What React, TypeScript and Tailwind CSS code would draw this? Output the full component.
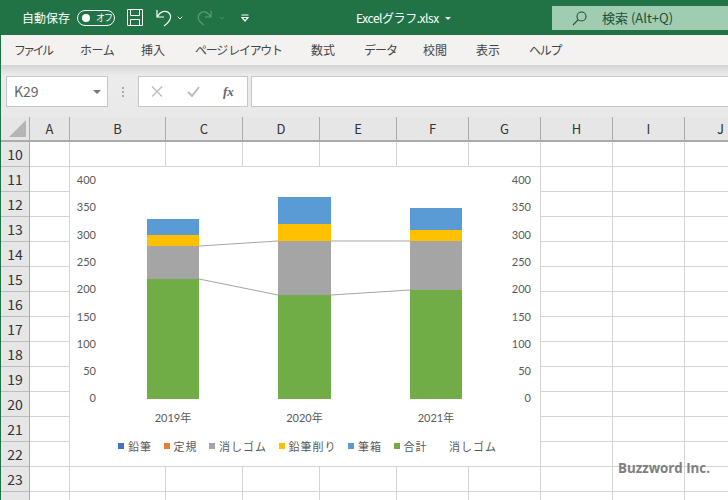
import { ChevronDown } from "lucide-react";

const FONT = "font-['Noto_Sans_CJK_JP','Noto_Sans',sans-serif]";

const tabs = [
  { label: "ファイル", w: "w-[66px] tracking-[-2.7px]" },
  { label: "ホーム", w: "w-[61px] tracking-[-0.4px]" },
  { label: "挿入", w: "w-[54px]" },
  { label: "ページ レイアウト", w: "w-[116px] tracking-[-1.3px]" },
  { label: "数式", w: "w-[53px]" },
  { label: "データ", w: "w-[59px] tracking-[-1px]" },
  { label: "校閲", w: "w-[53px]" },
  { label: "表示", w: "w-[53px]" },
  { label: "ヘルプ", w: "w-[50px] tracking-[-1.3px]" },
];

const cols = [
  { label: "A", w: "w-[40px]" },
  { label: "B", w: "w-[96px]" },
  { label: "C", w: "w-[77px]" },
  { label: "D", w: "w-[77px]" },
  { label: "E", w: "w-[77px]" },
  { label: "F", w: "w-[72px]" },
  { label: "G", w: "w-[72px]" },
  { label: "H", w: "w-[72px]" },
  { label: "I", w: "w-[72px]" },
  { label: "J", w: "w-[72px]" },
];

const rows = [10, 11, 12, 13, 14, 15, 16, 17, 18, 19, 20, 21, 22, 23, 24];

const bars = [
  { x: 77, w: 52, label: "2019年", seg: [[112, 120, "#70ad47"], [79, 33, "#a5a5a5"], [68, 11, "#ffc000"], [52, 16, "#5b9bd5"]] },
  { x: 208, w: 53, label: "2020年", seg: [[128, 104, "#70ad47"], [74, 54, "#a5a5a5"], [57, 17, "#ffc000"], [30, 27, "#5b9bd5"]] },
  { x: 340, w: 52, label: "2021年", seg: [[123, 109, "#70ad47"], [74, 49, "#a5a5a5"], [63, 11, "#ffc000"], [41, 22, "#5b9bd5"]] },
] as const;

const ticks = [400, 350, 300, 250, 200, 150, 100, 50, 0];

const legend = [
  { label: "鉛筆", color: "bg-[#4472c4]" },
  { label: "定規", color: "bg-[#ed7d31]" },
  { label: "消しゴム", color: "bg-[#a5a5a5]" },
  { label: "鉛筆削り", color: "bg-[#ffc000]" },
  { label: "筆箱", color: "bg-[#5b9bd5]" },
  { label: "合計", color: "bg-[#70ad47]" },
];

function Chart() {
  return (
    <div className="absolute left-[69px] top-[25px] w-[470px] h-[299px] bg-white flex flex-col">
      <svg width="470" height="258" viewBox="0 0 470 258" className="block shrink-0 font-['Lato',sans-serif]">
        {ticks.map((t, i) => (
          <g key={t} fontSize="11" fill="#595959">
            <text x="26" y={17 + i * 27.3} textAnchor="end">{t}</text>
            <text x="461" y={17 + i * 27.3} textAnchor="end">{t}</text>
          </g>
        ))}
        {bars.map((b) =>
          b.seg.map(([y, h, c]) => <rect key={c} x={b.x} y={y + 0} width={b.w} height={h} fill={c} />)
        )}
        <path d="M129 112 L208 128 M261 128 L340 123 M129 79 L208 74 M261 74 L340 74" stroke="#a5a5a5" strokeWidth="1" fill="none" />
        {bars.map((b) => (
          <text key={b.label} x={b.x + b.w / 2} y="255" textAnchor="middle" fontSize="11" fill="#595959" fontFamily="Lato, 'Noto Sans CJK JP', sans-serif">{b.label}</text>
        ))}
      </svg>
      <div className={`flex items-center pl-[48px] mt-[14px] text-[11px] leading-[14px] text-[#595959] ${FONT}`}>
        {legend.map((l) => (
          <div key={l.label} className="flex items-center mr-[11.5px]">
            <span className={`w-[6px] h-[6px] mr-[4px] ${l.color}`} />
            <span className="tracking-[1px]">{l.label}</span>
          </div>
        ))}
        <span className="ml-[10px] tracking-[1px]">消しゴム</span>
      </div>
    </div>
  );
}

export default function App() {
  return (
    <div className={`w-[728px] h-[500px] overflow-hidden bg-[#e6e6e6] flex flex-col border-l border-[#217346] ${FONT}`}>
      {/* title bar */}
      <div className="h-[35px] shrink-0 bg-[#217346] flex items-center text-white text-[12px] relative">
        <span className="ml-[21px]">自動保存</span>
        <div className="ml-[7px] w-[38px] h-[16px] rounded-full border border-white flex items-center pl-[4px]">
          <span className="w-[8px] h-[8px] rounded-full bg-white" />
          <span className="ml-[6px] text-[9px] leading-none tracking-[-1px]">オフ</span>
        </div>
        <svg width="16" height="17" viewBox="0 0 16 17" fill="none" stroke="white" strokeWidth="1" className="ml-[12px]">
          <path d="M0.5 0.5H15.5V16.5H0.5Z M3.5 0.5V6.5H12.5V0.5 M3.5 16.5V10.5H12.5V16.5" />
        </svg>
        <svg width="16" height="18" viewBox="0 0 16 18" fill="none" stroke="white" strokeWidth="1.2" className="ml-[13px]">
          <path d="M1 1V8H8 M1.5 7.5C4 2.5 9 1 12.5 3.5C16 6.5 15.5 11.5 8 17" />
        </svg>
        <ChevronDown size={8} strokeWidth={3} className="ml-[4px] text-white" />
        <svg width="15" height="17" viewBox="0 0 15 17" fill="none" stroke="#5d9c7c" strokeWidth="1.1" className="ml-[13px]">
          <path d="M14 2V8H8 M13.5 7.5C11 3 6 1.5 3.5 4C0 7 0 11.5 7 16" />
        </svg>
        <ChevronDown size={8} strokeWidth={2} className="ml-[6px] text-[#5d9c7c]" />
        <svg width="8" height="8" viewBox="0 0 8 8" fill="none" stroke="white" strokeWidth="1.2" className="ml-[15px]">
          <path d="M0.5 1H7.5 M1 3.5H7L4 7Z" />
        </svg>
        <span className="absolute left-[355px] top-[9px] text-[12px] leading-[17px] tracking-[-0.45px]">Excelグラフ.xlsx</span>
        <span className="absolute left-[444px] top-[17px] w-0 h-0 border-x-[3px] border-x-transparent border-t-[3px] border-t-white" />
        <div className="absolute left-[551px] top-[6px] w-[177px] h-[24px] bg-[#a0cdb2] flex items-center text-[#1f4f36] text-[13px]">
          <svg width="15" height="15" viewBox="0 0 15 15" fill="none" stroke="#1f4f36" strokeWidth="1.1" className="ml-[20px]">
            <circle cx="9.5" cy="5.5" r="4.5" />
            <path d="M6.3 8.7L1 14" />
          </svg>
          <span className="ml-[15px]">検索 (Alt+Q)</span>
        </div>
      </div>

      {/* ribbon tabs */}
      <div className="h-[30px] shrink-0 bg-[#f3f2f1] flex items-center text-[12px] text-[#444444] pl-[13px]">
        {tabs.map((t) => (
          <div key={t.label} className={`${t.w} shrink-0 whitespace-nowrap`}>{t.label}</div>
        ))}
      </div>

      {/* formula bar */}
      <div className="h-[52px] shrink-0 bg-gradient-to-b from-[#d4d4d4] via-[#ececec] via-[20%] to-[#e9e9e9] pt-[11px] flex items-start">
        <div className="ml-[5px] w-[102px] h-[31px] bg-white border border-[#c6c6c6] flex items-center justify-between pl-[7px] pr-[6px] text-[14px] text-[#666666]">
          <span>K29</span>
          <span className="w-0 h-0 border-x-[4px] border-x-transparent border-t-[4px] border-t-[#777777]" />
        </div>
        <div className="w-[30px] h-[31px] flex flex-col items-center justify-center gap-[2px]">
          <span className="w-[2px] h-[2px] bg-[#aaaaaa]" />
          <span className="w-[2px] h-[2px] bg-[#aaaaaa]" />
          <span className="w-[2px] h-[2px] bg-[#aaaaaa]" />
        </div>
        <div className="w-[110px] h-[31px] bg-white border border-[#c6c6c6] flex items-center">
          <svg width="12" height="11" viewBox="0 0 12 11" stroke="#bdbdbd" strokeWidth="1.4" fill="none" className="ml-[12px]">
            <path d="M1 0.5L11 10.5 M11 0.5L1 10.5" />
          </svg>
          <svg width="13" height="11" viewBox="0 0 13 11" stroke="#bdbdbd" strokeWidth="2" fill="none" className="ml-[24px]">
            <path d="M1 6L5 10L12 1" />
          </svg>
          <span className="ml-[23px] text-[13px] italic font-['Liberation_Serif',serif] font-bold text-[#666666]">fx</span>
        </div>
        <div className="ml-[3px] flex-1 h-[31px] bg-white border-y border-l border-[#c6c6c6]" />
      </div>

      {/* column headers */}
      <div className="h-[25px] shrink-0 flex bg-[#e6e6e6] border-b-2 border-[#ababab] text-[13px] text-[#333333]">
        <div className="w-[29px] shrink-0 relative border-r border-[#ababab]">
          <span className="absolute right-[3px] bottom-[3px] w-0 h-0 border-l-[17px] border-l-transparent border-b-[17px] border-b-[#b5b5b5]" />
        </div>
        {cols.map((c) => (
          <div key={c.label} className={`${c.w} shrink-0 flex items-center justify-center border-r border-[#ababab]`}>{c.label}</div>
        ))}
      </div>

      {/* sheet */}
      <div className="relative flex-1 bg-white">
        {rows.map((r) => (
          <div key={r} className="h-[25px] flex">
            <div className="w-[29px] shrink-0 bg-[#e6e6e6] border-r border-b border-r-[#ababab] border-b-[#bdbdbd] flex items-center justify-center text-[14px] text-[#333333]">{r}</div>
            {cols.map((c) => (
              <div key={c.label} className={`${c.w} shrink-0 border-r border-b border-[#d4d4d4]`} />
            ))}
          </div>
        ))}
        <Chart />
        <span className="absolute left-[617px] top-[317px] text-[13.3px] font-bold text-[#808080] font-['Open_Sans',sans-serif] leading-[18px]">Buzzword Inc.</span>
      </div>
    </div>
  );
}
